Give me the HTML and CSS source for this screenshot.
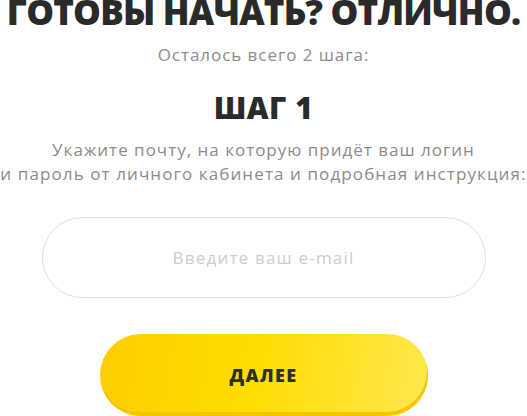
FILE: index.html
```html
<!DOCTYPE html>
<html lang="ru">
<head>
<meta charset="utf-8">
<link rel="stylesheet" href="styles.css">
</head>
<body>
<main class="page">
  <h1 class="title"><span>ГОТОВЫ НАЧАТЬ? ОТЛИЧНО.</span></h1>
  <p class="subtitle">Осталось всего 2 шага:</p>
  <h2 class="step">ШАГ 1</h2>
  <p class="desc"><span>Укажите почту, на которую придёт ваш логин</span><span>и пароль от личного кабинета и подробная инструкция:</span></p>
  <form class="form">
    <input class="email" type="text" placeholder="Введите ваш e-mail">
    <button class="next" type="button">ДАЛЕЕ</button>
  </form>
</main>
</body>
</html>
```

FILE: styles.css
```css
* { box-sizing: border-box; }
html, body { margin: 0; padding: 0; background: #fff; overflow: hidden; }
body { width: 527px; height: 416px; font-family: "Open Sans", "DejaVu Sans", sans-serif; }
.page {
  display: flex;
  flex-direction: column;
  align-items: center;
  width: 527px;
}
.title {
  margin: -4px 0 0;
  display: flex;
  justify-content: center;
  width: 100%;
  white-space: nowrap;
  font-size: 35px;
  line-height: 30px;
  font-weight: 800;
  color: #2a2a2a;
  letter-spacing: -0.8px;
  padding-top: 1px;
}
.subtitle {
  margin: 18px 0 0;
  font-size: 17px;
  line-height: 20px;
  color: #8c8c8c;
  letter-spacing: 0.95px;
}
.step {
  margin: 28px 0 0;
  font-size: 30px;
  line-height: 30px;
  font-weight: 800;
  color: #2a2a2a;
  letter-spacing: 0.5px;
}
.desc {
  margin: 15px 0 0;
  width: 100%;
  display: flex;
  flex-direction: column;
  align-items: center;
  white-space: nowrap;
  font-size: 17px;
  line-height: 24px;
  color: #8c8c8c;
  letter-spacing: 1px;
}
.desc span + span { letter-spacing: 1.1px; }
.form {
  margin-top: 31px;
  display: flex;
  flex-direction: column;
  align-items: center;
}
.email {
  width: 444px;
  height: 81px;
  border: 1px solid #dedede;
  border-radius: 41px;
  background: #fff;
  text-align: center;
  font-family: inherit;
  font-size: 17px;
  color: #333;
  outline: none;
  letter-spacing: 1.2px;
}
.email::placeholder { color: #cdcdcd; }
.next {
  margin-top: 36px;
  width: 328px;
  height: 82px;
  border: none;
  border-radius: 41px;
  background: linear-gradient(100deg, #ffcd00 0%, #ffdc00 45%, #ffe84e 100%);
  box-shadow: inset -1px -4px 0 #f6c500;
  font-family: inherit;
  font-size: 18px;
  font-weight: 800;
  color: #2e2e2e;
  letter-spacing: 1.4px;
  cursor: pointer;
}
```
